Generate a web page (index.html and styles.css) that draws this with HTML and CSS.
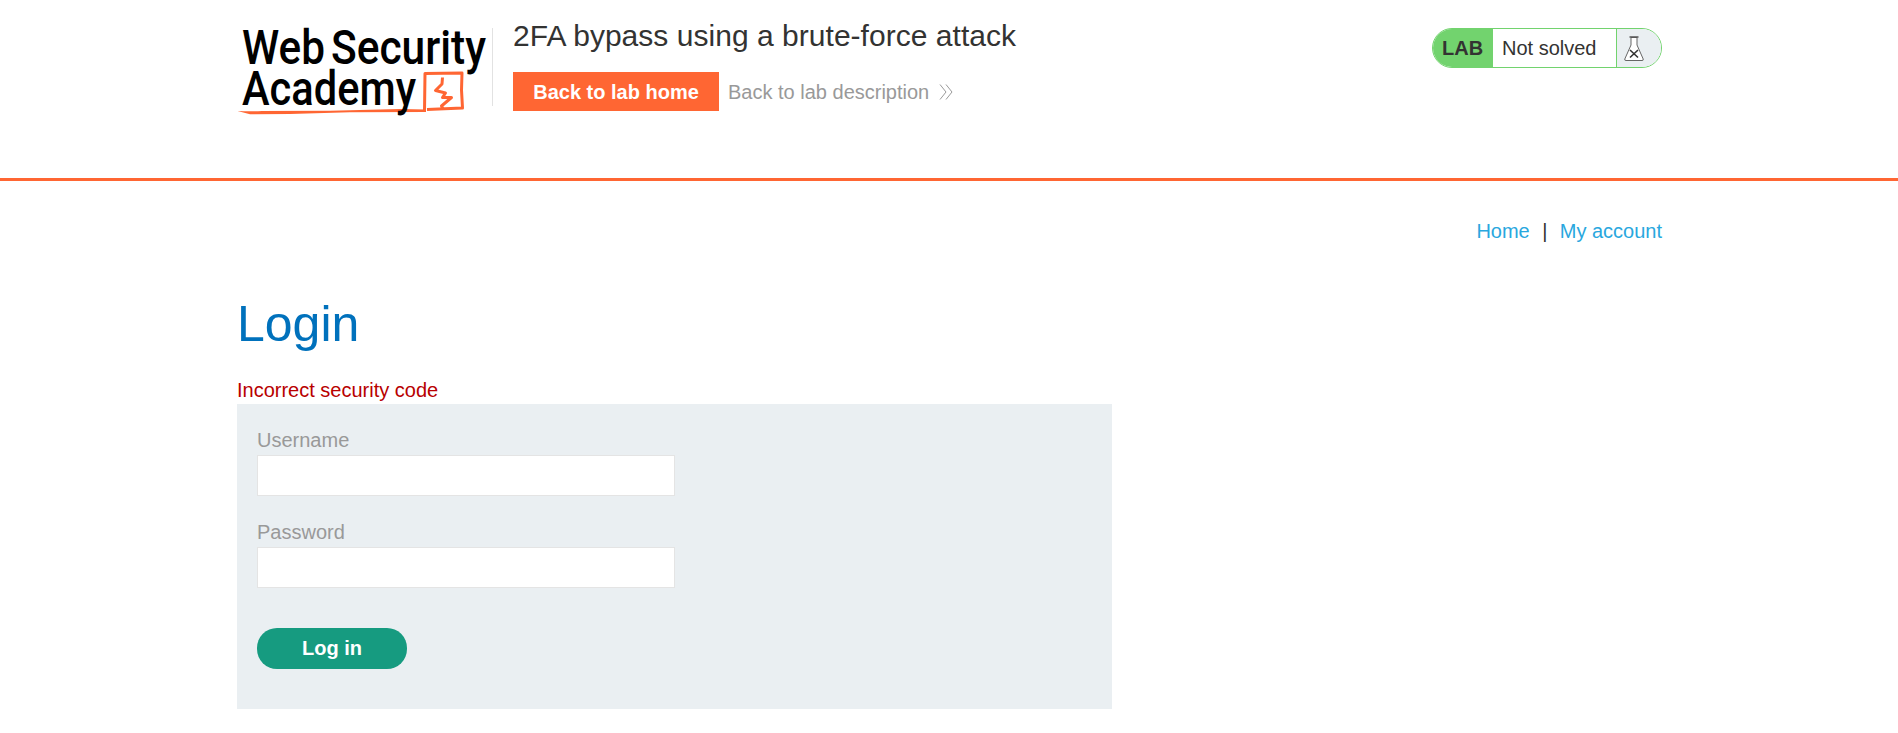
FILE: index.html
```html
<!DOCTYPE html>
<html lang="en">
<head>
<meta charset="utf-8">
<title>2FA bypass using a brute-force attack</title>
<link rel="stylesheet" href="styles.css">
</head>
<body>
<header class="lab-header">
  <div class="container header-row">
    <svg class="logo" viewBox="237 15 256 110" role="img" aria-label="Web Security Academy">
      <path class="logo-line" d="M424.500 111L425 73.500L462 73L461.500 90L462.500 108L427 109.500"/>
      <path class="logo-under" d="M237.500 111Q250 111.500 262 111L330 110.800L400 109L426 109.500V112L350 112.300L290 114L250 114.200Z"/>
      <path class="logo-bolt" d="M442.500 77.500L442 84L435.500 90.500L445.500 93L442.500 97.500L451.500 97.500L441.500 106L443 109"/>
      <g class="logo-text">
        <text x="242" y="64" textLength="83" lengthAdjust="spacingAndGlyphs">Web</text>
        <text x="331" y="64" textLength="155" lengthAdjust="spacingAndGlyphs">Security</text>
        <text x="242" y="105" textLength="174" lengthAdjust="spacingAndGlyphs">Academy</text>
      </g>
    </svg>
    <div class="title-block">
      <h2 class="title">2FA bypass using a brute-force attack</h2>
      <div class="actions">
        <a class="button-orange">Back to lab home</a>
        <a class="link-back">Back to lab description
          <svg class="chevrons" viewBox="0 0 14 16"><path d="M1 .5L7 8L1 15.500M7 .5L13 8L7 15.500"/></svg>
        </a>
      </div>
    </div>
    <div class="status">
      <span class="status-lab">LAB</span>
      <span class="status-text">Not solved</span>
      <span class="status-icon">
        <svg class="flask" viewBox="0 0 20 26">
          <path class="flask-body" d="M7 1.500V9L.8 23Q.3 24.500 2 24.500H18Q19.700 24.500 19.200 23L13 9V1.500Z"/>
          <path class="flask-top" d="M5.500 1H14.500"/>
          <path class="flask-x" d="M6 14L14 21.500M14 14L6 21.500"/>
        </svg>
      </span>
    </div>
  </div>
</header>
<main class="container">
  <nav class="nav"><a>Home</a><span>|</span><a>My account</a></nav>
  <h1 class="heading">Login</h1>
  <p class="warning">Incorrect security code</p>
  <form class="login-form">
    <label class="label" for="username">Username</label>
    <input class="input" id="username" type="text">
    <label class="label" for="password">Password</label>
    <input class="input" id="password" type="password">
    <button class="submit" type="button">Log in</button>
  </form>
</main>
</body>
</html>
```
FILE: styles.css
```css
* { box-sizing: border-box; }
body {
  margin: 0;
  background: #fff;
  color: #333332;
  font: 20px/24px "Liberation Sans", Arial, sans-serif;
}
.container { width: 1425px; margin: 0 236px 0 237px; }
.lab-header { height: 181px; border-bottom: 3px solid #ff6633; }
.header-row { display: flex; align-items: flex-start; }
.logo { width: 256px; height: 110px; margin-top: 15px; flex: none; overflow: visible; }
.logo-text { font: 500 48px Roboto, sans-serif; fill: #000; }
.logo-line, .logo-bolt { fill: none; stroke: #ff6633; stroke-width: 3; stroke-linejoin: round; }
.logo-under { fill: #ff6633; }
.title-block {
  height: 78px;
  margin-top: 28px;
  margin-left: -1px;
  padding-left: 20px;
  border-left: 1px solid #e2e2e2;
}
.title { margin: -10px 0 18px; font-size: 30px; line-height: 36px; font-weight: 400; letter-spacing: .03px; }
.actions { display: flex; align-items: flex-start; gap: 9px; }
.button-orange {
  width: 206px;
  height: 39px;
  background: #ff6633;
  color: #fff;
  font-weight: 700;
  line-height: 40px;
  text-align: center;
}
.link-back { display: flex; align-items: center; gap: 10px; color: #999; line-height: 40px; }
.chevrons { width: 14px; height: 16px; fill: none; stroke: #999; }
.status {
  display: flex;
  width: 230px;
  height: 40px;
  margin: 28px 0 0 auto;
  overflow: hidden;
  border: 1px solid #72d36e;
  border-radius: 20px;
  line-height: 39px;
}
.status-lab { width: 60px; padding-left: 9px; background: #72d36e; font-weight: 700; }
.status-text { flex: 1; padding-left: 9px; }
.status-icon { width: 45px; padding: 7px 7px; border-left: 1px solid #72d36e; background: #eaeff2; }
.flask { display: block; width: 20px; height: 26px; }
.flask-body { fill: #fff; stroke: #666; }
.flask-top { stroke: #555; stroke-width: 1.5; }
.flask-x { stroke: #333332; stroke-width: 1.6; }
.nav { display: flex; justify-content: flex-end; padding-top: 38px; }
.nav a { color: #29a7de; }
.nav span { width: 30px; text-align: center; }
.heading { margin: 52px 0 25px; color: #0071bc; font-size: 50px; line-height: 58px; font-weight: 400; }
.warning { margin: 0 0 2px; color: #b80000; }
.login-form { width: 875px; height: 305px; padding: 24px 20px; background: #eaeff2; }
.label { display: block; color: #999; }
.input {
  display: block;
  width: 418px;
  height: 41px;
  margin: 3px 0 24px;
  padding: 0 10px;
  border: 1px solid #e4e4e4;
  background: #fff;
  font: inherit;
}
.submit {
  display: block;
  width: 150px;
  height: 41px;
  margin-top: 40px;
  padding: 0;
  border: 0;
  border-radius: 20px;
  background: #169b80;
  color: #fff;
  font: 700 20px/41px "Liberation Sans", Arial, sans-serif;
}
```
